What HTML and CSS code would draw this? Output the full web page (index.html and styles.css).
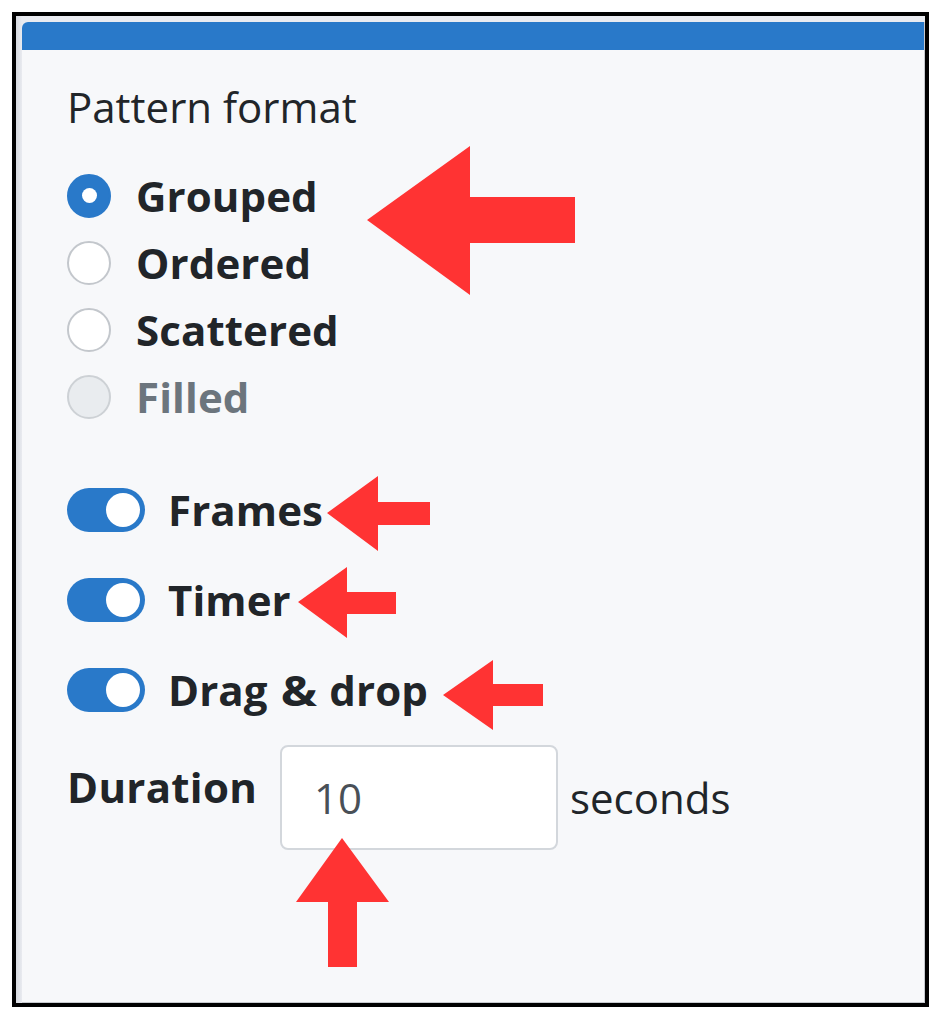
FILE: index.html
```html
<!DOCTYPE html>
<html lang="en">
<head>
<meta charset="utf-8">
<title>Pattern format</title>
<link rel="stylesheet" href="styles.css">
</head>
<body>
<div class="frame">
  <div class="card">
    <div class="card-header"></div>
    <div class="card-body">
      <div class="title">Pattern format</div>
      <div class="radios">
        <div class="radio-row"><span class="radio checked"></span><span class="lbl">Grouped</span></div>
        <div class="radio-row"><span class="radio"></span><span class="lbl">Ordered</span></div>
        <div class="radio-row"><span class="radio"></span><span class="lbl">Scattered</span></div>
        <div class="radio-row"><span class="radio disabled"></span><span class="lbl muted">Filled</span></div>
      </div>
      <div class="switches">
        <div class="switch-row"><span class="switch"></span><span class="lbl">Frames</span></div>
        <div class="switch-row"><span class="switch"></span><span class="lbl">Timer</span></div>
        <div class="switch-row"><span class="switch"></span><span class="lbl">Drag <span class="amp">&amp;</span> drop</span></div>
      </div>
      <div class="duration">
        <span class="dur-label">Duration</span>
        <input class="dur-input" type="text" value="10">
        <span class="unit">seconds</span>
      </div>
    </div>
  </div>
</div>
<svg class="annotations" width="940" height="1014" viewBox="0 0 940 1014" aria-hidden="true">
  <polygon points="367,220 470,146 470,197 575,197 575,243 470,243 470,295"/>
  <polygon points="327,513 378,476 378,502 430,502 430,525 378,525 378,551"/>
  <polygon points="298,602 347,567 347,592 396,592 396,614 347,614 347,638"/>
  <polygon points="443,695 493,660 493,684 543,684 543,706 493,706 493,730"/>
  <polygon points="342,838 389,902 357,902 357,967 328,967 328,902 296,902"/>
</svg>
</body>
</html>
```
FILE: styles.css
```css
html, body {
  margin: 0;
}
body {
  background: #ffffff;
  padding: 12px;
  font-family: "Open Sans", "Noto Sans", sans-serif;
  color: #212529;
}
.frame {
  width: 917px;
  height: 995px;
  box-sizing: border-box;
  border: 4px solid #000;
  background: linear-gradient(to right, #d6d9e0, #e9ebf0 6px);
  padding: 6px 0 0 6px;
  display: flex;
}
.card {
  flex: 1;
  background: #f7f8fa;
  border-top-left-radius: 6px;
  border-right: 1px solid #c6c9ce;
  border-bottom: 1px solid #c6c9ce;
  display: flex;
  flex-direction: column;
}
.card-header {
  height: 28px;
  background: #2979c9;
  border-top-left-radius: 6px;
}
.card-body {
  padding: 32px 0 0 45px;
}
.title {
  font-size: 42px;
  line-height: 50px;
  color: #212529;
}
.radios {
  margin-top: 30px;
}
.radio-row {
  display: flex;
  align-items: center;
  height: 67px;
  gap: 25px;
}
.radio {
  width: 44px;
  height: 44px;
  box-sizing: border-box;
  border-radius: 50%;
  border: 2px solid #c3c7cc;
  background: #fff;
  display: flex;
  align-items: center;
  justify-content: center;
}
.radio.checked {
  background: #2979c9;
  border-color: #2979c9;
}
.radio.checked::after {
  content: "";
  width: 15px;
  height: 15px;
  border-radius: 50%;
  background: #fff;
}
.radio.disabled {
  background: #e9ecef;
  border-color: #cdd1d5;
}
.lbl {
  font-weight: 700;
  font-size: 42px;
  letter-spacing: 0.1px;
  line-height: 67px;
  color: #212529;
}
.lbl .amp {
  display: inline-block;
  transform: scaleX(1.15);
  margin: 0 4px;
}
.lbl.muted {
  color: #6c757d;
}
.switches {
  margin-top: 35px;
}
.switch-row {
  display: flex;
  align-items: center;
  height: 90px;
  gap: 23px;
}
.switch-row .lbl {
  line-height: 90px;
}
.switch {
  width: 78px;
  height: 44px;
  box-sizing: border-box;
  border-radius: 22px;
  background: #2979c9;
  display: flex;
  align-items: center;
  justify-content: flex-end;
  padding-right: 5px;
}
.switch::after {
  content: "";
  width: 34px;
  height: 34px;
  border-radius: 50%;
  background: #fff;
}
.duration {
  margin-top: 10px;
  display: flex;
  align-items: center;
}
.dur-label {
  width: 213px;
  align-self: flex-start;
  margin-top: 14px;
  font-weight: 700;
  font-size: 42px;
  letter-spacing: 0.3px;
  line-height: 56px;
  color: #212529;
}
.dur-input {
  width: 278px;
  height: 105px;
  box-sizing: border-box;
  border: 2px solid #d3d7dc;
  border-radius: 8px;
  background: #fff;
  font-family: "Open Sans", "Noto Sans", sans-serif;
  font-size: 42px;
  color: #495057;
  padding: 0 0 0 32px;
  margin: 0;
  outline: none;
}
.unit {
  margin-left: 12px;
  font-size: 42px;
  line-height: 57px;
  color: #212529;
}
.annotations {
  position: absolute;
  top: 0;
  left: 0;
  pointer-events: none;
}
.annotations polygon {
  fill: #ff3333;
}
```
